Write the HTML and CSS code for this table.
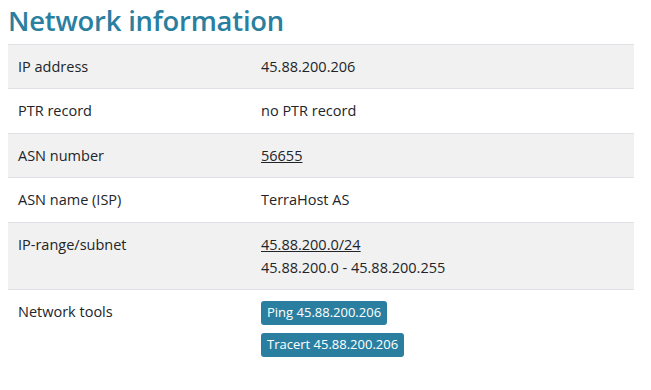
FILE: index.html
```html
<!DOCTYPE html>
<html>
<head>
<meta charset="utf-8">
<link rel="stylesheet" href="styles.css">
</head>
<body>
<h2 class="title">Network information</h2>
<table class="info">
  <colgroup><col class="kcol"><col></colgroup>
  <tr class="shade"><td>IP address</td><td>45.88.200.206</td></tr>
  <tr><td>PTR record</td><td>no PTR record</td></tr>
  <tr class="shade"><td>ASN number</td><td><a href="#">56655</a></td></tr>
  <tr><td>ASN name (ISP)</td><td>TerraHost AS</td></tr>
  <tr class="shade"><td>IP-range/subnet</td><td><a href="#">45.88.200.0/24</a><div class="range">45.88.200.0 - 45.88.200.255</div></td></tr>
  <tr><td>Network tools</td><td><div class="tools"><a class="btn" href="#">Ping 45.88.200.206</a><a class="btn" href="#">Tracert 45.88.200.206</a></div></td></tr>
</table>
</body>
</html>
```
FILE: styles.css
```css
body {
  margin: 0 8px;
  font-family: "Open Sans", "Noto Sans", sans-serif;
  font-size: 14.5px;
  color: #212529;
  background: #fff;
}
.title {
  margin: 0;
  padding-top: 2px;
  height: 42px;
  font-size: 27.4px;
  font-weight: 600;
  color: #2a7fa0;
  letter-spacing: -0.2px;
}
.info {
  width: 626px;
  border-collapse: collapse;
  table-layout: fixed;
}
.kcol { width: 243px; }
.info td {
  border-top: 1px solid #dee2e6;
  padding: 11px 10px 12px;
  line-height: 21px;
  vertical-align: top;
}
.info tr:nth-child(odd) td { padding-bottom: 11px; }
.shade td { background: #f1f1f1; }
.info a { color: #212529; }
.range { margin-top: 2px; }
.tools {
  display: flex;
  flex-direction: column;
  align-items: flex-start;
  gap: 8px;
}
.btn {
  display: inline-block;
  background: #2a7fa0;
  color: #fff !important;
  text-decoration: none;
  border-radius: 3px;
  padding: 1px 6px 2px;
  line-height: 21px;
  font-size: 13px;
}
```
